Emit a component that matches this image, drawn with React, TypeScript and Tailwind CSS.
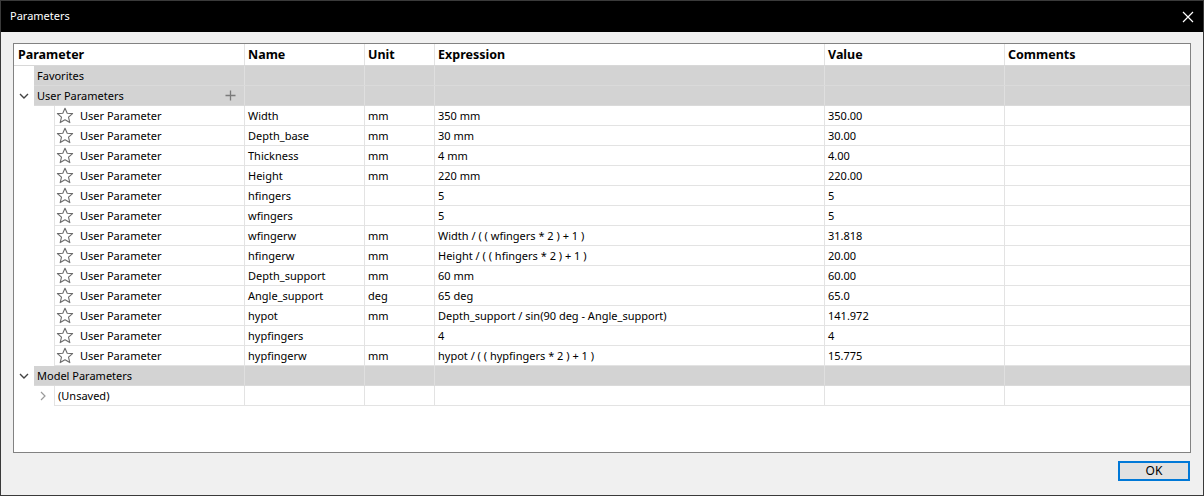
import React from "react";

const rows: [string, string, string, string][] = [
  ["Width", "mm", "350 mm", "350.00"],
  ["Depth_base", "mm", "30 mm", "30.00"],
  ["Thickness", "mm", "4 mm", "4.00"],
  ["Height", "mm", "220 mm", "220.00"],
  ["hfingers", "", "5", "5"],
  ["wfingers", "", "5", "5"],
  ["wfingerw", "mm", "Width / ( ( wfingers * 2 ) + 1 )", "31.818"],
  ["hfingerw", "mm", "Height / ( ( hfingers * 2 ) + 1 )", "20.00"],
  ["Depth_support", "mm", "60 mm", "60.00"],
  ["Angle_support", "deg", "65 deg", "65.0"],
  ["hypot", "mm", "Depth_support / sin(90 deg - Angle_support)", "141.972"],
  ["hypfingers", "", "4", "4"],
  ["hypfingerw", "mm", "hypot / ( ( hypfingers * 2 ) + 1 )", "15.775"],
];

const Star = () => (
  <svg width="18" height="17" viewBox="0 0 18 17" className="shrink-0">
    <polygon
      points="9,1.2 11.2,6.2 16.6,6.6 12.5,10.2 13.8,15.6 9,12.8 4.2,15.6 5.5,10.2 1.4,6.6 6.8,6.2"
      fill="none"
      stroke="#6b6b6b"
      strokeWidth="1.1"
      strokeLinejoin="round"
    />
  </svg>
);

const ChevronDown = () => (
  <svg width="10" height="6" viewBox="0 0 10 6">
    <polyline points="1,1 5,5 9,1" fill="none" stroke="#444" strokeWidth="1.4" />
  </svg>
);

const ChevronRight = () => (
  <svg width="6" height="10" viewBox="0 0 6 10">
    <polyline points="1,1 5,5 1,9" fill="none" stroke="#9a9a9a" strokeWidth="1.2" />
  </svg>
);

const cell = "h-full flex items-center pl-[3px] pt-[1px] border-l border-[#e3e3e3] truncate";
const gcell = "h-full border-l border-[#dfdfdf]";

function GroupRow({ label, expanded, plus }: { label: string; expanded?: boolean; plus?: boolean }) {
  return (
    <div className="flex h-[20px]">
      <div className="w-[230px] flex h-full">
        <div className="w-[20px] h-full flex items-center justify-center bg-white">
          {expanded && <ChevronDown />}
        </div>
        <div className="flex-1 h-full bg-[#d3d3d3] flex items-center pl-[3px] pt-[1px] border-b border-[#dadada] relative">
          <span>{label}</span>
          {plus && (
            <svg width="11" height="11" viewBox="0 0 11 11" className="absolute left-[191px] top-[4px]">
              <path d="M5.5 0.5v10M0.5 5.5h10" stroke="#7a7a7a" strokeWidth="1.3" />
            </svg>
          )}
        </div>
      </div>
      <div className="flex-1 flex bg-[#d3d3d3] border-b border-[#dadada]">
        <div className={`w-[120px] ${gcell}`} />
        <div className={`w-[70px] ${gcell}`} />
        <div className={`w-[390px] ${gcell}`} />
        <div className={`w-[180px] ${gcell}`} />
        <div className={`flex-1 ${gcell}`} />
      </div>
    </div>
  );
}

export default function App() {
  return (
    <div
      className="w-[1204px] h-[496px] bg-[#f0f0f0] border border-[#3a3a3a] flex flex-col text-[11px] text-black overflow-hidden"
      style={{ fontFamily: '"Noto Sans", "Liberation Sans", sans-serif' }}
    >
      <div className="h-[31px] bg-black flex items-center justify-between pl-[9px] pr-[9px] shrink-0">
        <span className="text-white text-[11px]">Parameters</span>
        <svg width="12" height="12" viewBox="0 0 12 12">
          <path d="M1 1L11 11M11 1L1 11" stroke="#fff" strokeWidth="1.2" />
        </svg>
      </div>
      <div className="ml-[12px] mr-[12px] mt-[11px] h-[410px] border border-[#828282] bg-white flex flex-col shrink-0">
        <div className="flex h-[22px] border-b border-[#d8d8d8] font-bold text-[12.5px]">
          <div className="w-[230px] flex items-center pl-[4px] pt-[2px]">Parameter</div>
          <div className={`w-[120px] ${cell} pt-[2px]`}>Name</div>
          <div className={`w-[70px] ${cell} pt-[2px]`}>Unit</div>
          <div className={`w-[390px] ${cell} pt-[2px]`}>Expression</div>
          <div className={`w-[180px] ${cell} pt-[2px]`}>Value</div>
          <div className={`flex-1 ${cell} pt-[2px]`}>Comments</div>
        </div>
        <GroupRow label="Favorites" />
        <GroupRow label="User Parameters" expanded plus />
        {rows.map((r) => (
          <div key={r[0]} className="flex h-[20px]">
            <div className="w-[230px] flex h-full">
              <div className="w-[40px] h-full" />
              <div className="flex-1 h-full flex items-center gap-[6px] pl-[1px] border-l border-b border-[#e3e3e3]">
                <Star />
                <span className="pt-[1px]">User Parameter</span>
              </div>
            </div>
            <div className="flex-1 flex h-full border-b border-[#e3e3e3]">
              <div className={`w-[120px] ${cell}`}>{r[0]}</div>
              <div className={`w-[70px] ${cell}`}>{r[1]}</div>
              <div className={`w-[390px] ${cell}`}>{r[2]}</div>
              <div className={`w-[180px] ${cell}`}>{r[3]}</div>
              <div className={`flex-1 ${cell}`} />
            </div>
          </div>
        ))}
        <GroupRow label="Model Parameters" expanded />
        <div className="flex h-[20px]">
          <div className="w-[230px] flex h-full">
            <div className="w-[40px] h-full flex items-center justify-end pr-[8px]">
              <ChevronRight />
            </div>
            <div className="flex-1 h-full flex items-center pl-[3px] pt-[1px] border-l border-b border-[#e3e3e3]">
              <span>(Unsaved)</span>
            </div>
          </div>
          <div className="flex-1 flex h-full border-b border-[#e3e3e3]">
            <div className={`w-[120px] ${cell}`} />
            <div className={`w-[70px] ${cell}`} />
            <div className={`w-[390px] ${cell}`} />
            <div className={`w-[180px] ${cell}`} />
            <div className={`flex-1 ${cell}`} />
          </div>
        </div>
      </div>
      <div className="flex justify-end mr-[13px] mt-[8px]">
        <button className="w-[72px] h-[20px] bg-[#e1e1e1] border-2 border-[#0078d7] flex items-center justify-center text-[12px]">
          OK
        </button>
      </div>
    </div>
  );
}
